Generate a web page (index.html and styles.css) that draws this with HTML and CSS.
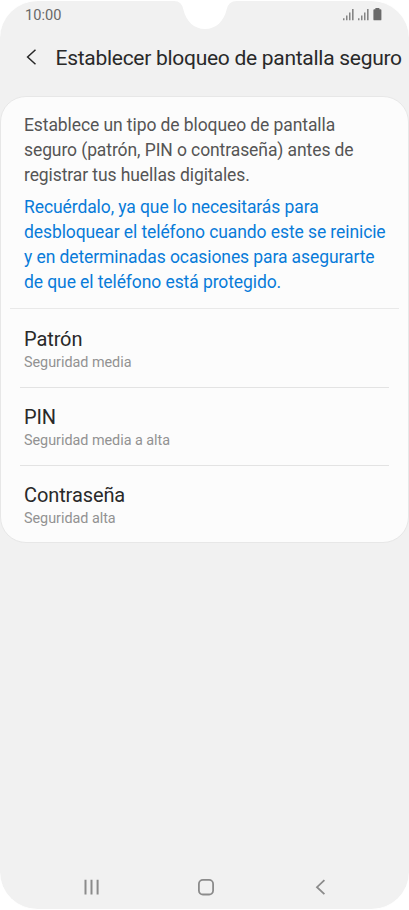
FILE: index.html
```html
<!DOCTYPE html>
<html lang="es">
<head>
<meta charset="utf-8">
<title>Establecer bloqueo de pantalla seguro</title>
<link rel="stylesheet" href="styles.css">
</head>
<body>
<main class="phone">
  <svg class="notch" width="64" height="30" viewBox="0 0 64 30"><path d="M0 0V1Q8 1 9.500 10C12 21 20 29 31 29S50 21 52.500 10Q54 1 63 1V0Z" fill="#fff"/></svg>
  <div class="status">
    <span class="time">10:00</span>
    <svg class="signals" width="40" height="14" viewBox="0 0 40 14" fill="#858585">
      <path d="M0 10.200h1.500v2H0zM3 7.400h1.500v4.800H3zM6 4.500h1.500v7.700H6zM9 1h1.600v11.200H9zM15 10.200h1.500v2H15zM18 7.400h1.500v4.800H18zM21 4.500h1.500v7.700H21zM24 1h1.600v11.200h-1.600z"/>
      <path fill="#6a6a6a" d="M32.400 0h4v1.300h1.100q.9 0 .9.900v9.200q0 .9-.9.900h-6.200q-.9 0-.9-.9V2.200q0-.9.900-.9h1.100z"/>
    </svg>
  </div>
  <header class="header">
    <svg class="back" width="12" height="18" viewBox="0 0 12 18"><path d="M10.500 1.800 2.600 9l7.900 7.200" fill="none" stroke="#292929" stroke-width="1.500"/></svg>
    <h1 class="title">Establecer bloqueo de pantalla seguro</h1>
  </header>
  <section class="card">
    <div class="intro">
      <p class="text">Establece un tipo de bloqueo de pantalla<br>seguro (patrón, PIN o contraseña) antes de<br>registrar tus huellas digitales.</p>
      <p class="text notice">Recuérdalo, ya que lo necesitarás para<br>desbloquear el teléfono cuando este se reinicie<br>y en determinadas ocasiones para asegurarte<br>de que el teléfono está protegido.</p>
    </div>
    <div class="options">
      <div class="option"><h2 class="name">Patrón</h2><p class="level">Seguridad media</p></div>
      <div class="option"><h2 class="name">PIN</h2><p class="level">Seguridad media a alta</p></div>
      <div class="option"><h2 class="name">Contraseña</h2><p class="level">Seguridad alta</p></div>
    </div>
  </section>
  <nav class="nav">
    <svg width="18" height="18" viewBox="0 0 18 18"><path d="M2.500 1.800v14.800M8.500 1.800v14.800M14.600 1.800v14.800" stroke="#8b8b8b" stroke-width="2"/></svg>
    <svg width="18" height="18" viewBox="0 0 18 18"><rect x="1.900" y="1.900" width="14.200" height="14.600" rx="4" fill="none" stroke="#8b8b8b" stroke-width="1.800"/></svg>
    <svg width="18" height="18" viewBox="0 0 18 18"><path d="M13.400 2.200 6 9.200l7.400 7" fill="none" stroke="#8b8b8b" stroke-width="1.800"/></svg>
  </nav>
</main>
</body>
</html>
```
FILE: styles.css
```css
* { box-sizing: border-box; }
body { margin: 0; background: #fff; font-family: Roboto, sans-serif; }
h1, h2, p { margin: 0; font-weight: 400; }
svg { display: block; flex: none; }
.phone {
  position: relative;
  display: flex;
  flex-direction: column;
  width: 409px;
  height: 910px;
  overflow: hidden;
  background: #f1f1f1;
  border: solid #fff;
  border-width: 1px 0;
  border-radius: 38px;
}
.notch { position: absolute; top: -1px; left: 174px; }
.status {
  display: flex;
  justify-content: space-between;
  height: 30px;
  padding: 6px 26px 0 25px;
}
.time { font-size: 14.6px; line-height: 16px; color: #686868; }
.signals { margin-top: 1px; }
.header {
  display: flex;
  align-items: center;
  height: 52px;
  padding-left: 25px;
}
.title { margin-left: 18.5px; padding-top: 1px; font-size: 21px; line-height: 26px; letter-spacing: -0.28px; color: #292929; white-space: nowrap; }
.card {
  margin-top: 13px;
  height: 447px;
  border: 1px solid #e7e7e7;
  border-radius: 26px;
  background: #fcfcfc;
}
.intro {
  height: 212px;
  margin: 0 9px;
  padding: 16px 0 0 14px;
  border-bottom: 1px solid #e9e9e9;
}
.text { font-size: 17.5px; line-height: 25px; letter-spacing: -0.09px; color: #555; white-space: nowrap; }
.notice { margin-top: 7px; color: #087bd9; }
.options { margin: 0 19px; }
.option { height: 78px; padding: 16px 0 0 4px; }
.option:first-child { height: 79px; padding-top: 17px; }
.option:not(:last-child) { border-bottom: 1px solid #e3e3e3; }
.name { font-size: 20px; line-height: 26px; letter-spacing: -0.1px; color: #292929; }
.level { padding-top: 1px; font-size: 14.4px; line-height: 20px; letter-spacing: -0.03px; color: #929292; }
.nav {
  display: flex;
  justify-content: space-between;
  margin-top: auto;
  padding: 0 80px 13px 83px;
}
```
